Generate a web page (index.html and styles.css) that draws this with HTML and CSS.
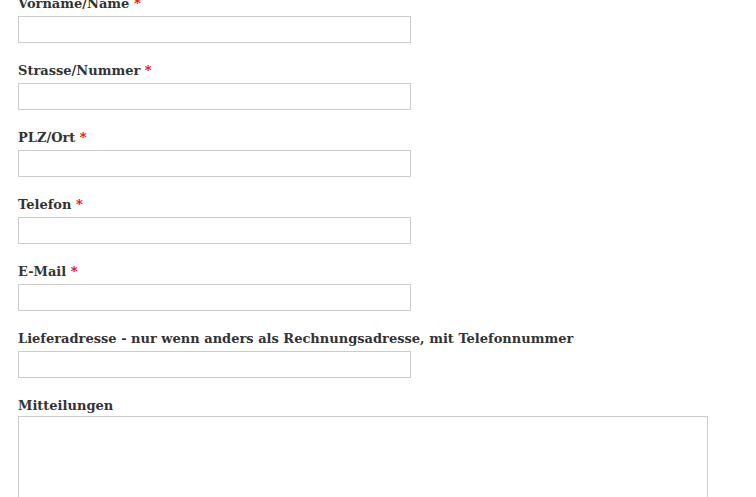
FILE: index.html
```html
<!DOCTYPE html>
<html lang="de">
<head>
    <meta charset="UTF-8">
    <title>Bestellung</title>
    <link rel="stylesheet" href="styles.css">
</head>
<body>
    <form class="order-form">
        <div class="form-group">
            <label for="name">Vorname/Name <span class="req">*</span></label>
            <input type="text" id="name" name="name">
        </div>
        <div class="form-group">
            <label for="strasse">Strasse/Nummer <span class="req">*</span></label>
            <input type="text" id="strasse" name="strasse">
        </div>
        <div class="form-group">
            <label for="ort">PLZ/Ort <span class="req">*</span></label>
            <input type="text" id="ort" name="ort">
        </div>
        <div class="form-group">
            <label for="telefon">Telefon <span class="req">*</span></label>
            <input type="text" id="telefon" name="telefon">
        </div>
        <div class="form-group">
            <label for="email">E-Mail <span class="req">*</span></label>
            <input type="text" id="email" name="email">
        </div>
        <div class="form-group">
            <label for="liefer">Lieferadresse - nur wenn anders als Rechnungsadresse, mit Telefonnummer</label>
            <input type="text" id="liefer" name="liefer">
        </div>
        <div class="form-group message">
            <label for="mitteilung">Mitteilungen</label>
            <textarea id="mitteilung" name="mitteilung"></textarea>
        </div>
    </form>
</body>
</html>
```

FILE: styles.css
```css
body {
    font-family: "DejaVu Serif", Georgia, serif;
    margin: 0;
    padding: 0;
    background-color: #fff;
    color: #333;
    overflow: hidden;
}
.order-form {
    margin-top: -3px;
    padding-left: 18px;
}
.form-group {
    margin-bottom: 21px;
}
.form-group label {
    display: block;
    font-size: 13px;
    font-weight: bold;
    line-height: 14px;
    padding-bottom: 5px;
}
.form-group.message label {
    padding-bottom: 3px;
}
.req {
    color: #e00;
}
.form-group input {
    display: block;
    box-sizing: border-box;
    width: 393px;
    height: 27px;
    margin: 0;
    border: 1px solid #ccc;
    padding: 4px;
}
.form-group textarea {
    display: block;
    box-sizing: border-box;
    width: 690px;
    height: 150px;
    margin: 0;
    border: 1px solid #ccc;
    resize: none;
}
```
